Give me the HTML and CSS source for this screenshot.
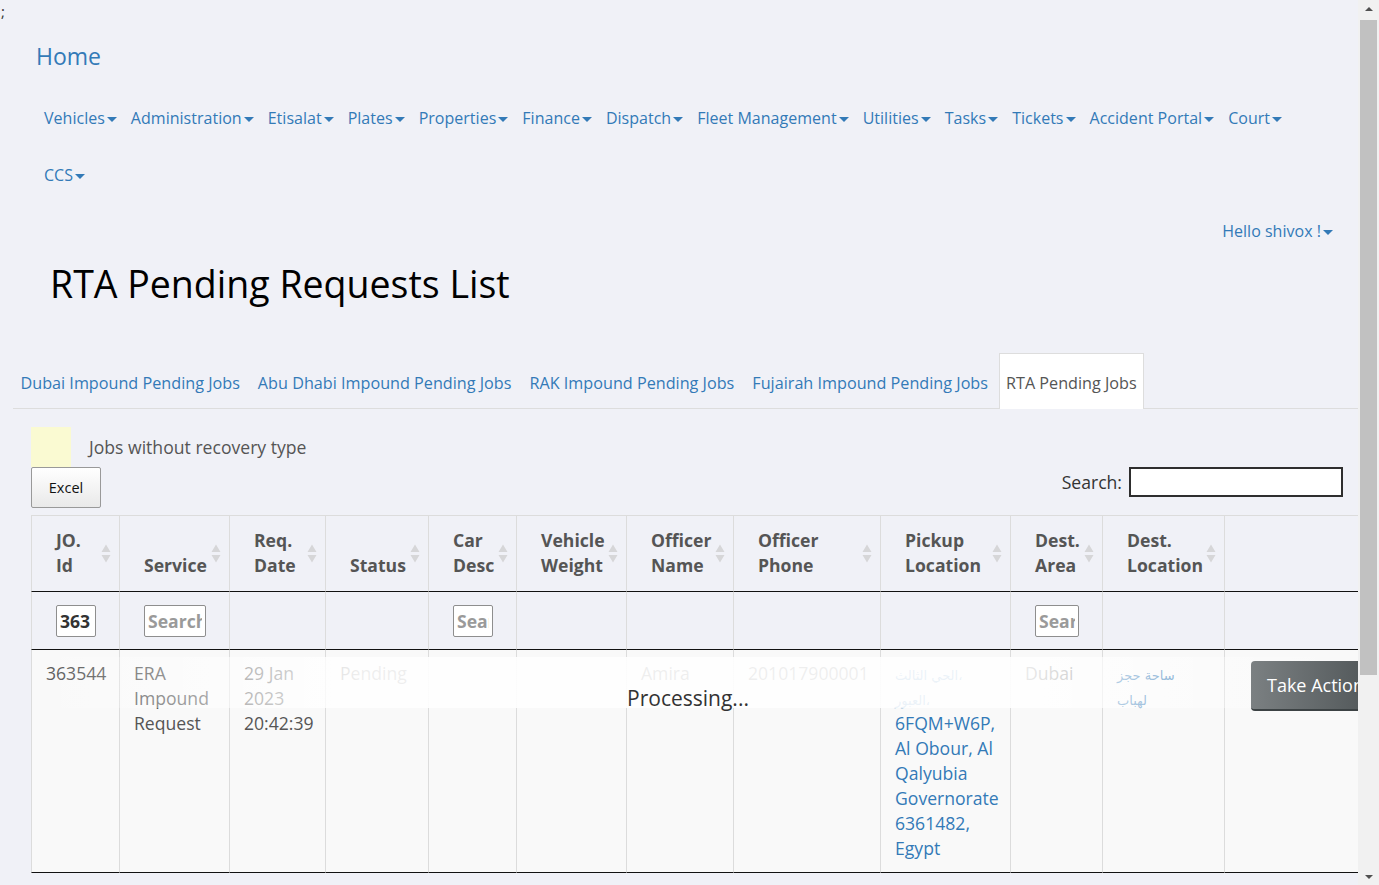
FILE: index.html
```html
<!DOCTYPE html>
<html lang="en">
<head>
<meta charset="utf-8">
<title>RTA Pending Requests List</title>
<link rel="stylesheet" href="styles.css">
</head>
<body>
<div class="viewport">
  <div class="page">
    <div class="semi">;</div>
    <header class="topbar">
      <a class="brand" href="#">Home</a>
      <ul class="menu">
        <li><a href="#">Vehicles<span class="caret"></span></a></li>
        <li><a href="#">Administration<span class="caret"></span></a></li>
        <li><a href="#">Etisalat<span class="caret"></span></a></li>
        <li><a href="#">Plates<span class="caret"></span></a></li>
        <li><a href="#">Properties<span class="caret"></span></a></li>
        <li><a href="#">Finance<span class="caret"></span></a></li>
        <li><a href="#">Dispatch<span class="caret"></span></a></li>
        <li><a href="#">Fleet Management<span class="caret"></span></a></li>
        <li><a href="#">Utilities<span class="caret"></span></a></li>
        <li><a href="#">Tasks<span class="caret"></span></a></li>
        <li><a href="#">Tickets<span class="caret"></span></a></li>
        <li><a href="#">Accident Portal<span class="caret"></span></a></li>
        <li><a href="#">Court<span class="caret"></span></a></li>
        <li><a href="#">CCS<span class="caret"></span></a></li>
      </ul>
      <ul class="menu menu-right">
        <li><a href="#">Hello shivox !<span class="caret"></span></a></li>
      </ul>
    </header>

    <h1 class="title">RTA Pending Requests List</h1>

    <ul class="tabs">
      <li><a href="#">Dubai Impound Pending Jobs</a></li>
      <li><a href="#">Abu Dhabi Impound Pending Jobs</a></li>
      <li><a href="#">RAK Impound Pending Jobs</a></li>
      <li><a href="#">Fujairah Impound Pending Jobs</a></li>
      <li class="active"><a href="#">RTA Pending Jobs</a></li>
    </ul>

    <div class="tab-content">
      <div class="legend">
        <span class="swatch"></span>
        <span class="legend-text">Jobs without recovery type</span>
      </div>

      <div class="dt-wrapper">
        <div class="dt-top">
          <button class="btn-excel" type="button">Excel</button>
          <label class="dt-search">Search:<input type="search"></label>
        </div>

        <table class="dt">
          <colgroup>
            <col class="c1"><col class="c2"><col class="c3"><col class="c4">
            <col class="c5"><col class="c6"><col class="c7"><col class="c8">
            <col class="c9"><col class="c10"><col class="c11"><col class="c12">
          </colgroup>
          <thead>
            <tr class="head">
              <th class="sort">JO. Id</th>
              <th class="sort">Service</th>
              <th class="sort">Req. Date</th>
              <th class="sort">Status</th>
              <th class="sort">Car Desc</th>
              <th class="sort">Vehicle Weight</th>
              <th class="sort">Officer Name</th>
              <th class="sort">Officer Phone</th>
              <th class="sort">Pickup Location</th>
              <th class="sort">Dest. Area</th>
              <th class="sort">Dest. Location</th>
              <th></th>
            </tr>
            <tr class="filters">
              <th><input class="f f-id" type="text" value="363"></th>
              <th><input class="f f-svc" type="text" placeholder="Search"></th>
              <th></th>
              <th></th>
              <th><input class="f f-car" type="text" placeholder="Search"></th>
              <th></th>
              <th></th>
              <th></th>
              <th></th>
              <th><input class="f f-area" type="text" placeholder="Search"></th>
              <th></th>
              <th></th>
            </tr>
          </thead>
          <tbody>
            <tr>
              <td>363544</td>
              <td>ERA Impound Request</td>
              <td>29 Jan 2023 20:42:39</td>
              <td>Pending</td>
              <td></td>
              <td></td>
              <td>Amira</td>
              <td>201017900001</td>
              <td><a class="link" href="#"><span class="ar">الحي الثالث،</span><br><span class="ar">العبور،</span><br>6FQM+W6P, Al Obour, Al Qalyubia Governorate 6361482, Egypt</a></td>
              <td>Dubai</td>
              <td><a class="link" href="#"><span class="ar">ساحة حجز</span><br><span class="ar">لهباب</span></a></td>
              <td><button class="btn-action" type="button">Take Action</button></td>
            </tr>
          </tbody>
        </table>

        <div class="processing">Processing...</div>
      </div>
    </div>
  </div>

  <div class="scrollbar">
    <span class="sb-btn"><span class="sb-up"></span></span>
    <span class="sb-thumb"></span>
    <span class="sb-space"></span>
    <span class="sb-btn"><span class="sb-down"></span></span>
  </div>
</div>
</body>
</html>
```

FILE: styles.css
```css
html, body {
  margin: 0;
  padding: 0;
  height: 100%;
  overflow: hidden;
  background: #f0f1f7;
  font-family: "Open Sans", "DejaVu Sans", sans-serif;
  color: #555;
}

a { text-decoration: none; }

.viewport {
  display: flex;
  height: 100vh;
}

.page {
  flex: 1;
  min-width: 0;
  overflow: hidden;
}

/* ---------- fake browser scrollbar ---------- */
.scrollbar {
  flex: none;
  width: 21px;
  background: #f1f1f1;
  display: flex;
  flex-direction: column;
  align-items: center;
}
.sb-btn {
  height: 17px;
  width: 21px;
  display: flex;
  align-items: center;
  justify-content: center;
}
.sb-up {
  width: 0; height: 0;
  border-left: 4px solid transparent;
  border-right: 4px solid transparent;
  border-bottom: 4px solid #505050;
}
.sb-down {
  width: 0; height: 0;
  border-left: 4px solid transparent;
  border-right: 4px solid transparent;
  border-top: 4px solid #505050;
}
.sb-thumb {
  width: 17px;
  height: 655px;
  margin-top: 3px;
  background: #c1c1c1;
}
.sb-space { flex: 1; }

/* ---------- top bar ---------- */
.semi {
  height: 22px;
  line-height: 22px;
  font-size: 15px;
  color: #333;
  padding-left: 1px;
}

.topbar {
  padding: 0 18px 0 36px;
}

.brand {
  display: flex;
  align-items: center;
  height: 67px;
  font-size: 23px;
  color: #337ab7;
}

.menu {
  list-style: none;
  margin: 0;
  padding: 0 0 0 1px;
  display: flex;
  flex-wrap: wrap;
}
.menu li a {
  display: flex;
  align-items: center;
  height: 57px;
  padding: 0 7px;
  font-size: 16px;
  letter-spacing: 0.02px;
  color: #337ab7;
}
.caret {
  display: inline-block;
  width: 0;
  height: 0;
  margin-left: 2px;
  margin-top: 3px;
  border-top: 5px solid #337ab7;
  border-left: 5px solid transparent;
  border-right: 5px solid transparent;
}
.menu-right {
  justify-content: flex-end;
}
.menu-right li a {
  height: 56px;
}

/* ---------- title ---------- */
.title {
  margin: 4px 0 49px;
  padding-left: 50px;
  font-size: 37.5px;
  font-weight: 400;
  line-height: 1.1;
  color: #000;
}

/* ---------- tabs ---------- */
.tabs {
  list-style: none;
  margin: 0 0 0 13px;
  padding: 0;
  display: flex;
  border-bottom: 1px solid #ddd;
}
.tabs li {
  margin-right: 3px;
  margin-bottom: -1px;
}
.tabs li a {
  display: block;
  padding: 18px 6.5px 14px;
  line-height: 22px;
  font-size: 16.2px;
  color: #337ab7;
  border: 1px solid transparent;
  border-bottom: none;
}
.tabs li.active a {
  background: #fff;
  color: #555;
  border-color: #ddd;
  padding-bottom: 15px;
}

/* ---------- tab content ---------- */
.tab-content {
  padding: 18px 13px 0 31px;
}

.legend {
  display: flex;
  align-items: center;
}
.swatch {
  width: 40px;
  height: 40px;
  background: #fafad2;
}
.legend-text {
  margin-left: 18px;
  font-size: 17.6px;
  color: #555;
}

.dt-wrapper {
  position: relative;
}

.dt-top {
  display: flex;
  justify-content: space-between;
  align-items: flex-start;
}

.btn-excel {
  width: 70px;
  height: 41px;
  border: 1px solid #999;
  border-radius: 2px;
  background: linear-gradient(to bottom, #ffffff 0%, #e9e9e9 100%);
  font-family: "Open Sans", sans-serif;
  font-size: 14.5px;
  color: #111;
  padding: 0;
}

.dt-search {
  display: flex;
  align-items: center;
  font-size: 17.6px;
  color: #333;
  margin-right: 2px;
}
.dt-search input {
  margin-left: 7px;
  width: 214px;
  height: 30px;
  box-sizing: border-box;
  border: 2px solid #2e2e2e;
  background: #fff;
  padding: 0 4px;
}

/* ---------- table ---------- */
.dt {
  margin-top: 7px;
  width: 1373px;
  table-layout: fixed;
  border-collapse: separate;
  border-spacing: 0;
  font-size: 17.6px;
  line-height: 25px;
  color: #555;
}
.c1 { width: 89px; }
.c2 { width: 110px; }
.c3 { width: 96px; }
.c4 { width: 103px; }
.c5 { width: 88px; }
.c6 { width: 110px; }
.c7 { width: 107px; }
.c8 { width: 147px; }
.c9 { width: 130px; }
.c10 { width: 92px; }
.c11 { width: 122px; }
.c12 { width: 180px; }

.dt th,
.dt td {
  border-right: 1px solid #dcdcdc;
  text-align: left;
}
.dt th:first-child,
.dt td:first-child {
  border-left: 1px solid #dcdcdc;
}

.dt .head th {
  border-top: 1px solid #dcdcdc;
  border-bottom: 1px solid #111;
  padding: 12px 20px 13px 24px;
  vertical-align: bottom;
  font-weight: 700;
}
.dt .head th.sort {
  background-image: url("data:image/svg+xml,%3Csvg xmlns='http://www.w3.org/2000/svg' width='10' height='19' viewBox='0 0 10 19'%3E%3Cpath d='M5 0.5L9.5 8H0.5z M0.5 11H9.5L5 18.5z' fill='%23d6d6d8'/%3E%3C/svg%3E");
  background-repeat: no-repeat;
  background-position: right 8px center;
}

.dt .filters th {
  border-bottom: 1px solid #111;
  padding: 13px 10px 12px 24px;
  vertical-align: top;
}
.f {
  display: block;
  height: 32px;
  box-sizing: border-box;
  border: 1px solid #8e8e8e;
  border-radius: 2px;
  background: #fff;
  padding: 0 3px;
  font-family: "Open Sans", sans-serif;
  font-size: 17.6px;
  font-weight: 700;
  color: #333;
}
.f::placeholder { color: #9a9a9a; opacity: 1; }
.f-id { width: 40px; }
.f-svc { width: 62px; }
.f-car { width: 40px; }
.f-area { width: 44px; }

.dt tbody td {
  background: #f9f9f9;
  border-bottom: 1px solid #111;
  padding: 11px 8px 11px 14px;
  vertical-align: top;
}
.link { color: #337ab7; }
.ar {
  font-family: "DejaVu Sans", sans-serif;
  font-size: 13px;
  line-height: 16px;
}

.btn-action {
  position: relative;
  z-index: 2;
  display: block;
  margin: 0 0 0 12px;
  height: 50px;
  padding: 0 16px;
  border: none;
  border-bottom: 2px solid #3c4244;
  border-radius: 4px;
  background: linear-gradient(to right, #7b8082 0%, #4e5456 100%);
  color: #fff;
  font-family: "Open Sans", sans-serif;
  font-size: 18px;
  white-space: nowrap;
}

/* ---------- processing overlay ---------- */
.processing {
  position: absolute;
  left: 0;
  top: 190px;
  width: 100%;
  height: 51px;
  box-sizing: border-box;
  padding-top: 26px;
  text-align: center;
  font-size: 21px;
  line-height: 30px;
  color: #333;
  background: linear-gradient(to right, rgba(255,255,255,0) 0%, rgba(255,255,255,0.9) 25%, rgba(255,255,255,0.9) 75%, rgba(255,255,255,0) 100%);
}
```
